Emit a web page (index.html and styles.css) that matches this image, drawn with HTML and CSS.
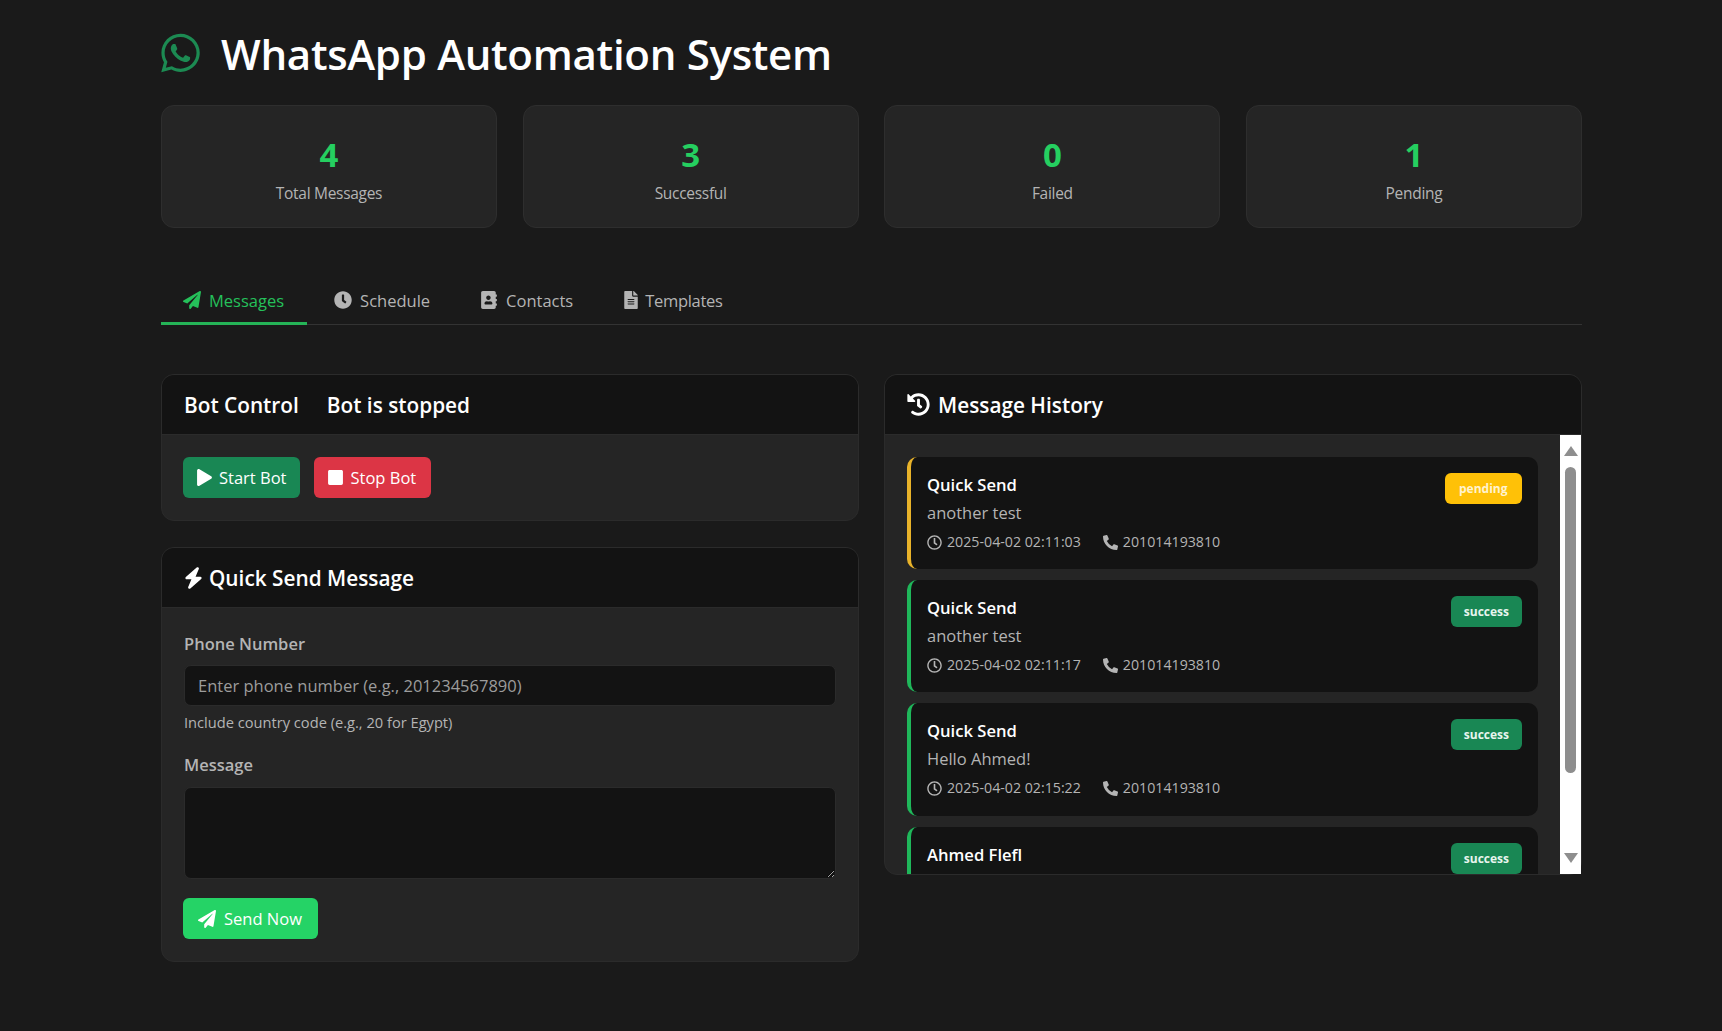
FILE: index.html
```html
<!DOCTYPE html>
<html lang="en">
<head>
<meta charset="utf-8">
<title>WhatsApp Automation System</title>
<link rel="stylesheet" href="styles.css">
</head>
<body>
<svg class="sprite" aria-hidden="true">
  <symbol id="i-plane" viewBox="0 0 512 512"><path d="M476 3.2L12.5 270.6c-18.1 10.4-15.8 35.6 2.2 43.2L121 358.4l287.3-253.2c5.5-4.9 13.3 2.6 8.6 8.3L176 407v80.5c0 23.6 28.5 32.9 42.5 15.8L282 426l124.6 52.2c14.2 6 30.4-2.9 33-18.2l72-432C515 7.8 493.3-6.8 476 3.2z"/></symbol>
  <symbol id="i-clock" viewBox="0 0 512 512"><path d="M256,8C119,8,8,119,8,256S119,504,256,504,504,393,504,256,393,8,256,8Zm92.49,313h0l-20,25a16,16,0,0,1-22.49,2.5h0l-67-49.72a40,40,0,0,1-15-31.23V112a16,16,0,0,1,16-16h32a16,16,0,0,1,16,16V256l58,42.5A16,16,0,0,1,348.49,321Z"/></symbol>
  <symbol id="i-clock-r" viewBox="0 0 512 512"><path d="M256 8C119 8 8 119 8 256s111 248 248 248 248-111 248-248S393 8 256 8zm0 448c-110.5 0-200-89.5-200-200S145.5 56 256 56s200 89.5 200 200-89.5 200-200 200zm61.8-104.4l-84.9-61.7c-3.1-2.3-4.9-5.9-4.9-9.7V116c0-6.6 5.4-12 12-12h32c6.6 0 12 5.4 12 12v141.7l66.8 48.6c5.4 3.9 6.5 11.4 2.6 16.8L334.6 349c-3.9 5.3-11.4 6.5-16.8 2.6z"/></symbol>
  <symbol id="i-history" viewBox="0 0 512 512"><path d="M504 255.531c.253 136.64-111.18 248.372-247.82 248.468-59.015.042-113.223-20.53-155.822-54.911-11.077-8.94-11.905-25.541-1.839-35.607l11.267-11.267c8.609-8.609 22.353-9.551 31.891-1.984C173.062 425.135 212.781 440 256 440c101.705 0 184-82.311 184-184 0-101.705-82.311-184-184-184-48.814 0-93.149 18.969-126.068 49.932l50.754 50.754c10.08 10.08 2.941 27.314-11.313 27.314H24c-8.837 0-16-7.163-16-16V38.627c0-14.254 17.234-21.393 27.314-11.314l49.372 49.372C129.209 34.136 189.552 8 256 8c136.81 0 247.747 110.78 248 247.531zm-180.912 78.784l9.823-12.63c8.138-10.463 6.253-25.542-4.21-33.679L288 256.349V152c0-13.255-10.745-24-24-24h-16c-13.255 0-24 10.745-24 24v135.651l65.409 50.874c10.463 8.137 25.541 6.253 33.679-4.21z"/></symbol>
  <symbol id="i-phone" viewBox="0 0 512 512"><path d="M497.39 361.8l-112-48a24 24 0 0 0-28 6.9l-49.6 60.6A370.66 370.66 0 0 1 130.6 204.11l60.6-49.6a23.94 23.94 0 0 0 6.9-28l-48-112A24.16 24.16 0 0 0 122.6.61l-104 24A24 24 0 0 0 0 48c0 256.5 207.9 464 464 464a24 24 0 0 0 23.4-18.6l24-104a24.29 24.29 0 0 0-14.01-27.6z"/></symbol>
  <symbol id="i-play" viewBox="0 0 448 512"><path d="M424.4 214.7L72.4 6.6C43.8-10.3 0 6.1 0 47.9V464c0 37.5 40.7 60.1 72.4 41.3l352-208c31.4-18.5 31.5-64.1 0-82.6z"/></symbol>
  <symbol id="i-stop" viewBox="0 0 448 512"><path d="M400 32H48C21.5 32 0 53.5 0 80v352c0 26.5 21.5 48 48 48h352c26.5 0 48-21.5 48-48V80c0-26.5-21.5-48-48-48z"/></symbol>
  <symbol id="i-bolt" viewBox="0 0 448 512"><path d="M349.4 44.6c5.9-13.7 1.5-29.7-10.6-38.5s-28.6-8-39.9 1.8l-256 224c-10 8.8-13.6 22.9-8.9 35.3S50.7 288 64 288H175.5L98.6 467.4c-5.9 13.7-1.5 29.7 10.6 38.5s28.6 8 39.9-1.8l256-224c10-8.8 13.6-22.9 8.9-35.3s-16.6-20.7-30-20.7H272.5L349.4 44.6z"/></symbol>
  <symbol id="i-book" viewBox="0 0 448 512"><path d="M436 160c6.6 0 12-5.4 12-12v-40c0-6.6-5.4-12-12-12h-20V48c0-26.5-21.5-48-48-48H48C21.5 0 0 21.5 0 48v416c0 26.5 21.5 48 48 48h320c26.5 0 48-21.5 48-48v-48h20c6.6 0 12-5.4 12-12v-40c0-6.6-5.4-12-12-12h-20v-64h20c6.6 0 12-5.4 12-12v-40c0-6.6-5.4-12-12-12h-20v-64h20zm-228-32c35.3 0 64 28.7 64 64s-28.7 64-64 64-64-28.7-64-64 28.7-64 64-64zm112 236.8c0 10.6-10 19.2-22.4 19.2H118.4C106 384 96 375.4 96 364.8v-19.2c0-31.8 30.1-57.6 67.2-57.6h5c12.3 5.1 25.7 8 39.8 8s27.6-2.9 39.8-8h5c37.1 0 67.2 25.8 67.2 57.6v19.2z"/></symbol>
  <symbol id="i-file" viewBox="0 0 384 512"><path d="M224 136V0H24C10.7 0 0 10.7 0 24v464c0 13.3 10.7 24 24 24h336c13.3 0 24-10.7 24-24V160H248c-13.2 0-24-10.8-24-24zm64 236c0 6.6-5.4 12-12 12H108c-6.6 0-12-5.4-12-12v-8c0-6.6 5.4-12 12-12h168c6.6 0 12 5.4 12 12v8zm0-64c0 6.6-5.4 12-12 12H108c-6.6 0-12-5.4-12-12v-8c0-6.6 5.4-12 12-12h168c6.6 0 12 5.4 12 12v8zm0-72v8c0 6.6-5.4 12-12 12H108c-6.6 0-12-5.4-12-12v-8c0-6.6 5.4-12 12-12h168c6.6 0 12 5.4 12 12zm96-114.1v6.1H256V0h6.1c6.4 0 12.5 2.5 17 7l97.9 98c4.5 4.5 7 10.6 7 16.9z"/></symbol>
  <symbol id="i-wa" viewBox="0 0 448 512"><path d="M380.9 97.1C339 55.1 283.2 32 223.9 32c-122.4 0-222 99.6-222 222 0 39.1 10.2 77.3 29.6 111L0 480l117.7-30.9c32.4 17.7 68.9 27 106.1 27h.1c122.3 0 224.1-99.6 224.1-222 0-59.3-25.2-115-67.1-157zm-157 341.6c-33.2 0-65.7-8.9-94-25.7l-6.7-4-69.8 18.3L72 359.2l-4.4-7c-18.5-29.4-28.2-63.3-28.2-98.2 0-101.7 82.8-184.5 184.6-184.5 49.3 0 95.6 19.2 130.4 54.1 34.8 34.9 56.2 81.2 56.1 130.5 0 101.8-84.9 184.6-186.6 184.6zm101.2-138.2c-5.5-2.8-32.8-16.2-37.9-18-5.1-1.9-8.8-2.8-12.5 2.8-3.7 5.6-14.3 18-17.6 21.8-3.2 3.7-6.5 4.2-12 1.4-32.6-16.3-54-29.1-75.5-66-5.7-9.8 5.7-9.1 16.3-30.3 1.8-3.7.9-6.9-.5-9.7-1.4-2.8-12.5-30.1-17.1-41.2-4.5-10.8-9.1-9.3-12.5-9.5-3.2-.2-6.9-.2-10.6-.2-3.7 0-9.7 1.4-14.8 6.9-5.1 5.6-19.4 19-19.4 46.3 0 27.3 19.9 53.7 22.6 57.4 2.8 3.7 39.1 59.7 94.8 83.8 35.2 15.2 49 16.5 66.6 13.9 10.7-1.6 32.8-13.4 37.4-26.4 4.6-13 4.6-24.1 3.2-26.4-1.3-2.5-5-3.9-10.5-6.6z"/></symbol>
</svg>
<div class="container">
  <header class="page-header">
    <svg class="logo"><use href="#i-wa"/></svg>
    <h1 class="page-title">WhatsApp Automation System</h1>
  </header>

  <section class="stats">
    <div class="stat"><div class="stat-num">4</div><div class="stat-label">Total Messages</div></div>
    <div class="stat"><div class="stat-num">3</div><div class="stat-label">Successful</div></div>
    <div class="stat"><div class="stat-num">0</div><div class="stat-label">Failed</div></div>
    <div class="stat"><div class="stat-num">1</div><div class="stat-label">Pending</div></div>
  </section>

  <nav class="tabs">
    <a class="tab active"><svg class="tab-icon"><use href="#i-plane"/></svg>Messages</a>
    <a class="tab"><svg class="tab-icon"><use href="#i-clock"/></svg>Schedule</a>
    <a class="tab"><svg class="tab-icon"><use href="#i-book"/></svg>Contacts</a>
    <a class="tab"><svg class="tab-icon tab-icon-file"><use href="#i-file"/></svg><span class="tab-tight">Templates</span></a>
  </nav>

  <main class="columns">
    <div class="column">
      <section class="panel">
        <div class="panel-head"><h2 class="panel-title">Bot Control</h2><span class="panel-title status">Bot is stopped</span></div>
        <div class="panel-body button-row">
          <button class="btn btn-start"><svg class="btn-icon"><use href="#i-play"/></svg>Start Bot</button>
          <button class="btn btn-stop"><svg class="btn-icon"><use href="#i-stop"/></svg>Stop Bot</button>
        </div>
      </section>

      <section class="panel">
        <div class="panel-head"><svg class="head-icon bolt"><use href="#i-bolt"/></svg><h2 class="panel-title">Quick Send Message</h2></div>
        <form class="panel-body form">
          <label class="label" for="phone">Phone Number</label>
          <input class="field" id="phone" type="text" placeholder="Enter phone number (e.g., 201234567890)">
          <div class="hint">Include country code (e.g., 20 for Egypt)</div>
          <label class="label label-msg" for="msg">Message</label>
          <textarea class="field area" id="msg"></textarea>
          <button class="btn btn-send" type="button"><svg class="btn-icon send-icon"><use href="#i-plane"/></svg>Send Now</button>
        </form>
      </section>
    </div>

    <section class="panel history">
      <div class="panel-head history-head"><svg class="head-icon history-icon"><use href="#i-history"/></svg><h2 class="panel-title">Message History</h2></div>
      <div class="history-body">
        <div class="list">
          <article class="item item-pending">
            <div class="item-main">
              <div class="item-name">Quick Send</div>
              <div class="item-msg">another test</div>
              <div class="meta"><span class="meta-part"><svg class="meta-icon"><use href="#i-clock-r"/></svg>2025-04-02 02:11:03</span><span class="meta-part"><svg class="meta-icon"><use href="#i-phone"/></svg>201014193810</span></div>
            </div>
            <span class="badge badge-pending">pending</span>
          </article>
          <article class="item">
            <div class="item-main">
              <div class="item-name">Quick Send</div>
              <div class="item-msg">another test</div>
              <div class="meta"><span class="meta-part"><svg class="meta-icon"><use href="#i-clock-r"/></svg>2025-04-02 02:11:17</span><span class="meta-part"><svg class="meta-icon"><use href="#i-phone"/></svg>201014193810</span></div>
            </div>
            <span class="badge">success</span>
          </article>
          <article class="item">
            <div class="item-main">
              <div class="item-name">Quick Send</div>
              <div class="item-msg">Hello Ahmed!</div>
              <div class="meta"><span class="meta-part"><svg class="meta-icon"><use href="#i-clock-r"/></svg>2025-04-02 02:15:22</span><span class="meta-part"><svg class="meta-icon"><use href="#i-phone"/></svg>201014193810</span></div>
            </div>
            <span class="badge">success</span>
          </article>
          <article class="item">
            <div class="item-main">
              <div class="item-name">Ahmed Flefl</div>
            </div>
            <span class="badge">success</span>
          </article>
        </div>
        <div class="scrollbar">
          <span class="arrow arrow-up"></span>
          <span class="thumb"></span>
          <span class="arrow arrow-down"></span>
        </div>
      </div>
    </section>
  </main>
</div>
</body>
</html>
```

FILE: styles.css
```css
* { box-sizing: border-box; }
html, body { margin: 0; height: 100%; }
body {
  background: #1a1a1a;
  color: #fff;
  font-family: "Open Sans", "Liberation Sans", sans-serif;
  font-size: 16px;
  overflow: hidden;
}
.sprite { display: none; }
.container { width: 1421px; margin-left: 161px; }

.page-header { height: 105px; display: flex; align-items: center; padding-top: 4px; }
.logo { width: 39px; height: 44px; fill: #1c8a52; margin: -4px 21px 0 0; }
.page-title { margin: 0; font-size: 42px; font-weight: 600; line-height: 1.2; letter-spacing: -0.29px; }

.stats { display: grid; grid-template-columns: repeat(4, 336px); justify-content: space-between; }
.stat {
  height: 123px;
  background: #252525;
  border: 1px solid #2e2e2e;
  border-radius: 13px;
  text-align: center;
  padding-top: 27px;
}
.stat-num { font-size: 33px; font-weight: 700; line-height: 44px; color: #25cf60; }
.stat-label { font-size: 15.5px; line-height: 24px; color: #b4b4b4; margin-top: 4px; letter-spacing: -0.3px; }

.tabs { display: flex; gap: 6px; margin-top: 47px; height: 50px; border-bottom: 1px solid #333; }
.tab {
  display: flex;
  align-items: center;
  height: 50px;
  padding: 3px 22px 0;
  font-size: 16.5px;
  color: #b4b4b4;
  border-bottom: 3px solid transparent;
}
.tab-icon { width: 18px; height: 18px; fill: currentColor; margin-right: 8px; }
.tab-icon-file { margin-right: 6px; width: 16px; }
.tab-tight { letter-spacing: -0.3px; }
.tab.active { color: #25c05a; border-bottom-color: #25b457; padding-right: 23px; margin-right: -1px; }

.columns { display: grid; grid-template-columns: 698px 698px; justify-content: space-between; align-items: start; margin-top: 49px; }
.column { display: flex; flex-direction: column; gap: 26px; }

.panel { background: #252525; border: 1px solid #2b2b2b; border-radius: 13px; overflow: hidden; }
.panel-head {
  height: 60px;
  background: #131313;
  border-bottom: 1px solid #2b2b2b;
  display: flex;
  align-items: center;
  padding: 0 22px;
}
.panel-title { margin: 0; font-size: 20.8px; font-weight: 600; color: #fff; }
.status { margin-left: 28px; }
.head-icon { width: 22px; height: 22px; fill: #fff; margin-right: 7px; flex: none; }
.history-icon { width: 23px; height: 23px; margin-right: 8px; }
.bolt { width: 19px; margin-right: 6px; }

.panel-body { padding: 22px; }
.button-row { display: flex; gap: 14px; padding-left: 21px; }
.btn {
  display: inline-flex;
  align-items: center;
  height: 41px;
  border: 0;
  border-radius: 6px;
  font-family: inherit;
  font-size: 16.5px;
  color: #fff;
  padding: 0 14px;
}
.btn-icon { width: 15px; height: 17px; fill: #fff; margin-right: 7px; }
.btn-start { background: #198754; }
.btn-stop { background: #dc3545; padding-right: 15px; }

.form { display: flex; flex-direction: column; align-items: flex-start; padding-top: 24px; padding-bottom: 22px; }
.label { font-size: 16.5px; font-weight: 600; color: #b4b4b4; line-height: 24px; }
.label-msg { margin-top: 20px; }
.field {
  width: 100%;
  background: #131313;
  border: 1px solid #2b2b2b;
  border-radius: 7px;
  color: #fff;
  font-family: inherit;
  font-size: 16.5px;
  padding: 0 13px;
}
input.field { height: 41px; margin-top: 9px; }
.field::placeholder { color: #9c9c9c; opacity: 1; }
.hint { font-size: 14.65px; line-height: 22px; color: #b4b4b4; margin-top: 5px; }
.area { display: block; height: 92px; margin-top: 10px; resize: vertical; color-scheme: dark; }
.btn-send { background: #25d366; margin: 19px 0 0 -1px; padding: 0 16px 0 15px; }
.send-icon { width: 18px; height: 18px; margin-right: 8px; }

.history { height: 501px; overflow: visible; }
.history-head { border-radius: 12px 12px 0 0; }
.history-body { display: flex; height: 439px; }
.list { flex: 1; min-width: 0; overflow: hidden; padding: 22px 22px 0; display: flex; flex-direction: column; gap: 11px; border-bottom-left-radius: 12px; }
.item {
  flex: none;
  height: 112.2px;
  background: #131313;
  border-left: 4px solid #1fb75a;
  border-radius: 10px;
  display: flex;
  justify-content: space-between;
  align-items: flex-start;
  padding: 16px 16px 0 16px;
}
.item-pending { border-left-color: #e9b32a; }
.item-name { font-size: 16.6px; font-weight: 600; line-height: 24px; color: #fff; }
.item-msg { font-size: 16.5px; line-height: 28px; color: #b4b4b4; margin-top: 2px; }
.meta { display: flex; gap: 22px; font-size: 14.2px; line-height: 22px; color: #b4b4b4; margin-top: 4px; }
.meta-part { display: flex; align-items: center; }
.meta-icon { width: 15px; height: 15px; fill: currentColor; margin-right: 5px; }
.badge {
  display: flex;
  align-items: center;
  height: 31px;
  padding: 0 13px;
  border-radius: 6px;
  background: #198754;
  color: #e8f5ee;
  font-size: 12px;
  font-weight: 700;
}
.badge-pending { background: #ffc107; color: #fff3d0; padding: 0 14.5px; }

.scrollbar { flex: none; width: 21px; background: #fff; display: flex; flex-direction: column; align-items: center; padding-top: 11px; }
.arrow { width: 0; height: 0; border-left: 7px solid transparent; border-right: 7px solid transparent; }
.arrow-up { border-bottom: 10px solid #8e8e8e; }
.arrow-down { border-top: 10px solid #8e8e8e; margin-top: 80px; }
.thumb { width: 11px; height: 306px; background: #8e8e8e; border-radius: 6px; margin-top: 11px; }
```
